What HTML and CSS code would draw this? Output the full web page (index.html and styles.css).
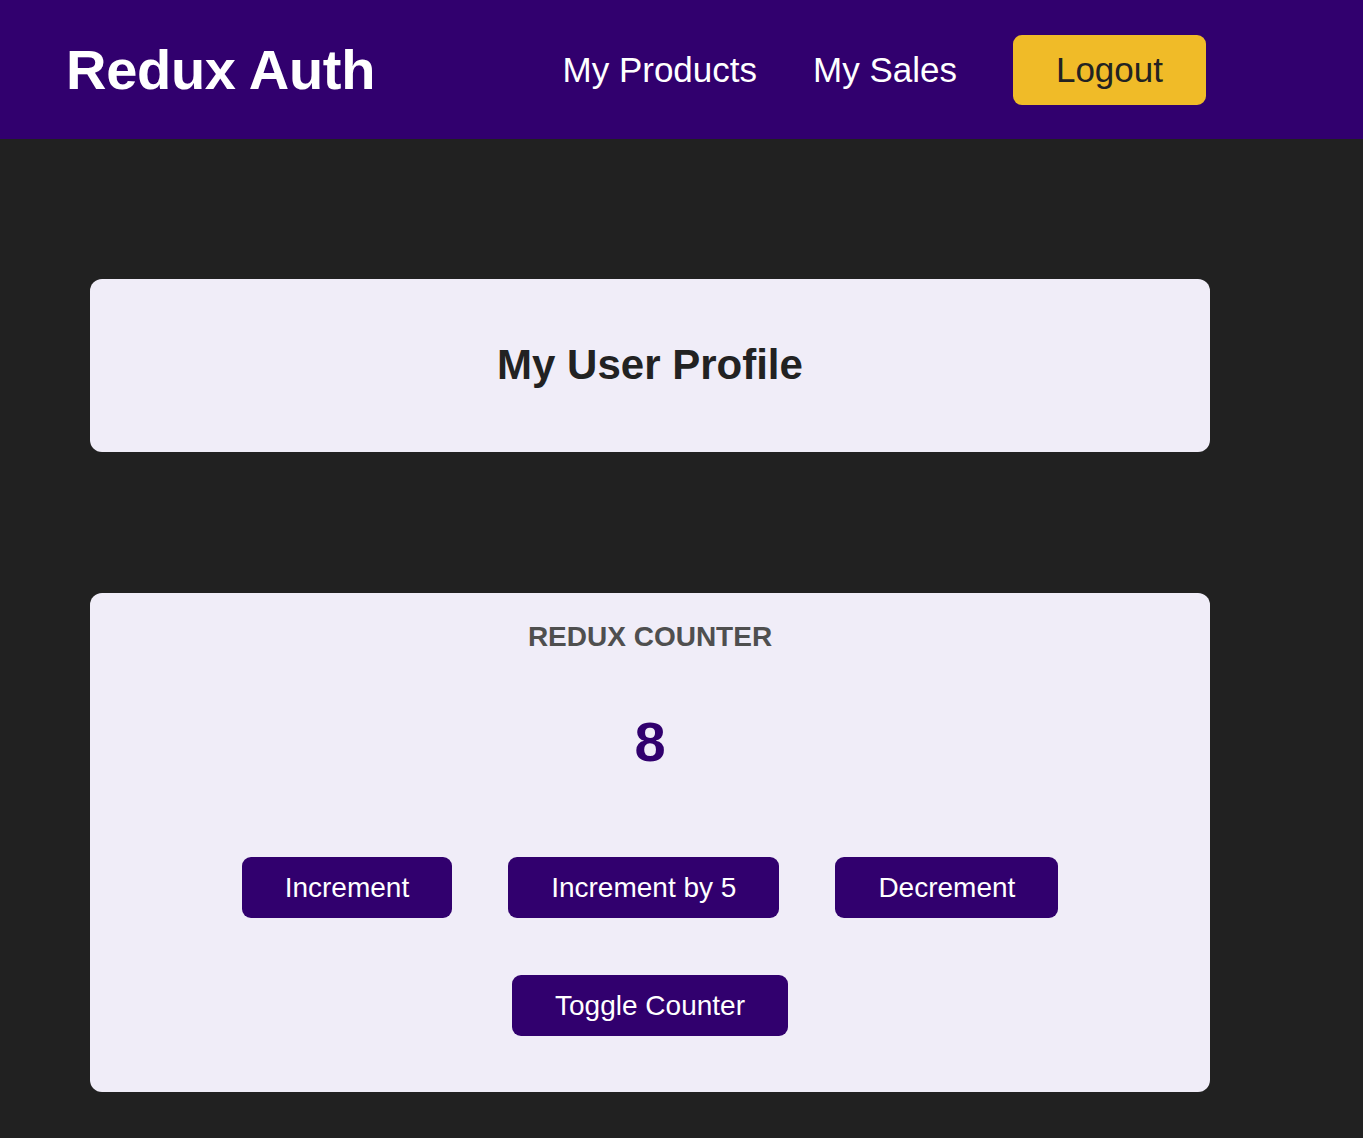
FILE: index.html
```html
<!DOCTYPE html>
<html lang="en">
<head>
<meta charset="utf-8">
<title>Redux Auth</title>
<link rel="stylesheet" href="styles.css">
</head>
<body>
<header class="header">
  <h1 class="brand">Redux Auth</h1>
  <nav>
    <ul class="nav">
      <li><a class="nav-link" href="#">My Products</a></li>
      <li><a class="nav-link" href="#">My Sales</a></li>
      <li><button class="logout">Logout</button></li>
    </ul>
  </nav>
</header>
<main class="main">
  <section class="card profile">
    <h2 class="profile-title">My User Profile</h2>
  </section>
  <section class="card counter">
    <h3 class="counter-title">REDUX COUNTER</h3>
    <div class="counter-value">8</div>
    <div class="actions">
      <div class="row">
        <button class="btn">Increment</button>
        <button class="btn">Increment by 5</button>
        <button class="btn">Decrement</button>
      </div>
      <div class="row">
        <button class="btn">Toggle Counter</button>
      </div>
    </div>
  </section>
</main>
</body>
</html>
```
FILE: styles.css
```css
* { box-sizing: border-box; }

html, body {
  margin: 0;
  padding: 0;
  background: #212121;
  font-family: "Liberation Sans", Arial, Helvetica, sans-serif;
}

.header {
  display: flex;
  align-items: center;
  justify-content: space-between;
  height: 139px;
  padding: 0 157px 0 66px;
  background: #31006e;
}

.brand {
  margin: 0;
  color: #ffffff;
  font-size: 56px;
  line-height: 56px;
  font-weight: 700;
  letter-spacing: -0.3px;
}

.nav {
  display: flex;
  align-items: center;
  gap: 56px;
  margin: 0;
  padding: 0;
  list-style: none;
}

.nav-link {
  color: #ffffff;
  text-decoration: none;
  font-size: 35px;
  line-height: 40px;
  display: block;
}

.logout {
  display: block;
  font-family: inherit;
  font-size: 35px;
  line-height: 40px;
  padding: 15px 43px;
  border: none;
  border-radius: 9px;
  background: #f0bb28;
  color: #222222;
  cursor: pointer;
}

.main {
  width: 1300px;
  padding: 140px 0 46px;
}

.card {
  width: 1120px;
  margin: 0 auto;
  background: #f0edf8;
  border-radius: 12px;
  text-align: center;
}

.profile {
  padding: 61px 0 62px;
}

.profile-title {
  margin: 0;
  color: #222222;
  font-size: 42px;
  line-height: 50px;
  font-weight: 700;
}

.counter {
  margin-top: 141px;
  padding: 27px 0 56px;
}

.counter-title {
  margin: 0;
  color: #4f4f4f;
  font-size: 28px;
  line-height: 34px;
  font-weight: 700;
}

.counter-value {
  margin-top: 54px;
  color: #31006e;
  font-size: 56px;
  line-height: 67px;
  font-weight: 700;
}

.actions {
  margin-top: 82px;
  display: flex;
  flex-direction: column;
  gap: 57px;
}

.row {
  display: flex;
  justify-content: center;
  gap: 56px;
}

.btn {
  font-family: inherit;
  font-size: 28px;
  line-height: 33px;
  padding: 14px 43px;
  border: none;
  border-radius: 9px;
  background: #31006e;
  color: #ffffff;
  cursor: pointer;
}
```
